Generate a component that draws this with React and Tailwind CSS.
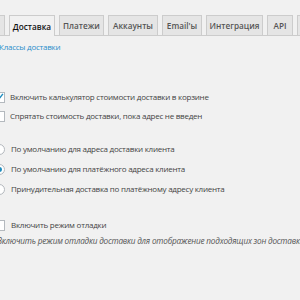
export default function App() {
  const tabs = [
    { label: 'Доставка', w: 'w-[46px]', active: true },
    { label: 'Платежи', w: 'w-[45px]' },
    { label: 'Аккаунты', w: 'w-[50px]' },
    { label: "Email'ы", w: 'w-[40px]' },
    { label: 'Интеграция', w: 'w-[57px]' },
    { label: 'API', w: 'w-[26px]' },
    { label: 'Статус', w: 'w-[40px]' },
  ]

  return (
    <div className="w-[300px] h-[300px] overflow-hidden bg-[#f1f1f1] text-[#444] font-['Open_Sans',sans-serif] text-[8px] tracking-[-0.25px]">
      {/* Tabs */}
      <div className="pt-[15px] border-b border-[#ccc] h-[36px] flex gap-[4px] whitespace-nowrap tracking-normal">
        <div className="w-[5px] shrink-0 h-[20px] bg-[#e5e5e5] border border-l-0 border-b-0 border-[#ccc]" />
        {tabs.map(t => (
          <div key={t.label}
            className={`${t.w} shrink-0 pt-[2px] flex items-center justify-center font-semibold text-[8.2px] border border-b-0 border-[#ccc] ${t.active ? 'bg-[#f1f1f1] text-[#111] h-[21px] relative z-10' : 'bg-[#e5e5e5] text-[#555] h-[20px]'}`}>
            {t.label}
          </div>
        ))}
      </div>

      {/* Sub links */}
      <div className="mt-[5px] leading-[12px] text-[#2b8fcb] whitespace-nowrap ml-[-1px]">Классы доставки</div>

      {/* Checkboxes */}
      <div className="mt-[38px] ml-[-6px] flex flex-col gap-[7px] whitespace-nowrap">
        <label className="flex items-center gap-[5px] h-[12px]">
          <span className="w-[11px] h-[11px] border border-[#b4b9be] bg-white flex items-center justify-center">
            <svg width="10" height="10" viewBox="0 0 10 10"><path d="M1.5 5.2 L4 7.8 L8.8 1.5" fill="none" stroke="#1e8cbe" strokeWidth="1.6" /></svg>
          </span>
          <span>Включить калькулятор стоимости доставки в корзине</span>
        </label>
        <label className="flex items-center gap-[5px] h-[12px]">
          <span className="w-[11px] h-[11px] border border-[#b4b9be] bg-white" />
          <span>Спрятать стоимость доставки, пока адрес не введен</span>
        </label>
      </div>

      {/* Radios */}
      <div className="mt-[21px] ml-[-6px] flex flex-col gap-[8px] whitespace-nowrap">
        {[
          ['По умолчанию для адреса доставки клиента', false],
          ['По умолчанию для платёжного адреса клиента', true],
          ['Принудительная доставка по платёжному адресу клиента', false],
        ].map(([label, on]) => (
          <label key={label} className="flex items-center gap-[6px] h-[12px]">
            <span className="w-[11px] h-[11px] rounded-full border border-[#b4b9be] bg-white flex items-center justify-center">
              {on && <span className="w-[5px] h-[5px] rounded-full bg-[#1e8cbe]" />}
            </span>
            <span>{label}</span>
          </label>
        ))}
      </div>

      {/* Debug */}
      <div className="mt-[24px] ml-[-6px] whitespace-nowrap">
        <label className="flex items-center gap-[6px] h-[12px]">
          <span className="w-[11px] h-[11px] border border-[#b4b9be] bg-white" />
          <span>Включить режим отладки</span>
        </label>
      </div>
      <div className="mt-[4px] ml-[-3px] italic text-[8.2px] tracking-[-0.2px] text-[#555] whitespace-nowrap">
        Включить режим отладки доставки для отображение подходящих зон доставки.
      </div>
    </div>
  )
}
